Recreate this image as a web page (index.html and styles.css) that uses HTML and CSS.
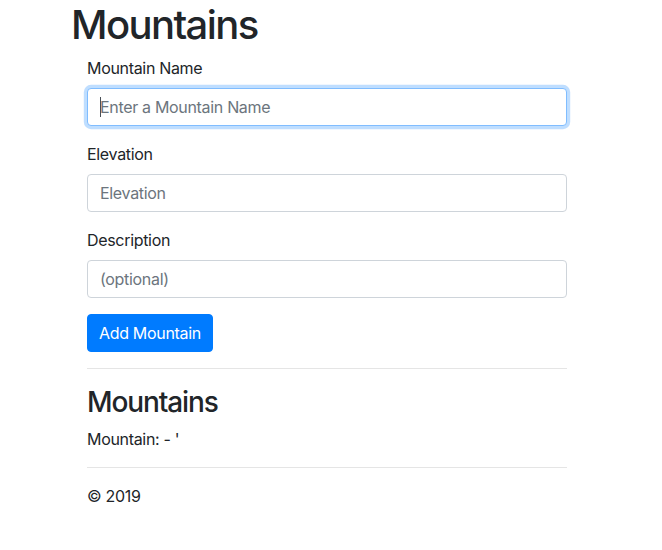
FILE: index.html
```html
<!DOCTYPE html>
<html lang="en">
<head>
<meta charset="utf-8">
<title>Mountains</title>
<link rel="stylesheet" href="styles.css">
</head>
<body>
<div class="page">
  <h1 class="title">Mountains</h1>
  <div class="content">
    <form class="form">
      <div class="form-group">
        <label class="label" for="name">Mountain Name</label>
        <div class="field-wrap">
          <input class="input input-focus" id="name" type="text" placeholder="Enter a Mountain Name">
          <span class="caret"></span>
        </div>
      </div>
      <div class="form-group">
        <label class="label" for="elev">Elevation</label>
        <input class="input" id="elev" type="text" placeholder="Elevation">
      </div>
      <div class="form-group">
        <label class="label" for="desc">Description</label>
        <input class="input" id="desc" type="text" placeholder="(optional)">
      </div>
      <button class="btn" type="button">Add Mountain</button>
    </form>
    <hr class="rule">
    <h3 class="subtitle">Mountains</h3>
    <p class="item">Mountain: - '</p>
    <hr class="rule">
    <footer class="footer">© 2019</footer>
  </div>
</div>
</body>
</html>
```
FILE: styles.css
```css
* { box-sizing: border-box; }
html, body { margin: 0; padding: 0; background: #fff; }
body {
  font-family: Inter, "Liberation Sans", sans-serif;
  font-size: 16px;
  line-height: 1.5;
  letter-spacing: -0.02em;
  color: #212529;
}
.page { padding-left: 71px; }
.title {
  margin: 0 0 7px 0;
  padding-top: 1px;
  font-size: 40px;
  font-weight: 500;
  line-height: 1.2;
  letter-spacing: -0.04em;
}
.content { margin-left: 16px; width: 480px; }
.form { margin: 0; }
.form-group { margin-bottom: 16px; }
.label { display: inline-block; margin-bottom: 8px; }
.field-wrap { position: relative; }
.input {
  display: block;
  width: 100%;
  height: 38px;
  padding: 6px 12px;
  font-family: inherit;
  font-size: 16px;
  line-height: 1.5;
  letter-spacing: -0.02em;
  color: #495057;
  background: #fff;
  border: 1px solid #ced4da;
  border-radius: 4px;
  outline: none;
}
.input::placeholder { color: #6c757d; opacity: 1; }
.input-focus {
  border-color: #80bdff;
  box-shadow: 0 0 0 3.2px rgba(0, 123, 255, 0.25);
}
.caret {
  position: absolute;
  left: 13px;
  top: 9px;
  width: 1px;
  height: 20px;
  background: #495057;
}
.btn {
  display: inline-block;
  padding: 6px 11px;
  font-family: inherit;
  font-size: 16px;
  line-height: 1.5;
  letter-spacing: -0.02em;
  color: #fff;
  background: #007bff;
  border: 1px solid #007bff;
  border-radius: 4px;
}
.rule {
  margin: 16px 0;
  border: 0;
  border-top: 1px solid rgba(0, 0, 0, 0.1);
}
.subtitle {
  margin: 0 0 7px 0;
  padding-top: 1px;
  font-size: 28px;
  font-weight: 500;
  line-height: 1.2;
  letter-spacing: -0.04em;
}
.item { margin: 0 0 16px 0; }
.footer { display: block; }
```
